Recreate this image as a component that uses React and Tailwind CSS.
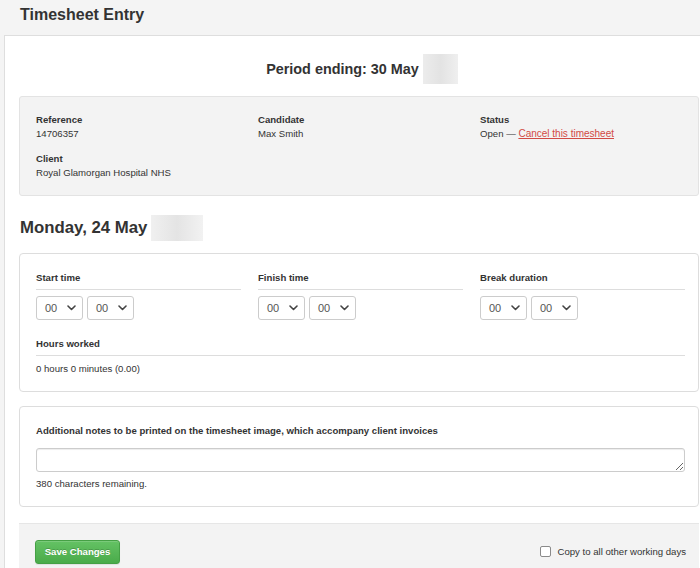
import React from "react";

function Chevron() {
  return (
    <svg width="9" height="6" viewBox="0 0 9 6" className="shrink-0">
      <polyline points="1,1 4.5,4.5 8,1" fill="none" stroke="#444" strokeWidth="1.6" strokeLinecap="round" strokeLinejoin="round" />
    </svg>
  );
}

function Sel() {
  return (
    <div className="w-[47px] h-[24px] border border-[#cccccc] rounded-[3px] bg-white flex items-center justify-between pl-[8px] pr-[6px] text-[11px] text-[#555555]">
      <span className="text-[#555555]">00</span>
      <Chevron />
    </div>
  );
}

function TimeCol({ label }) {
  return (
    <div>
      <div className="font-bold leading-[14px] pb-[4px] border-b border-[#dddddd]">{label}</div>
      <div className="mt-[6px] flex gap-[4px]">
        <Sel />
        <Sel />
      </div>
    </div>
  );
}

export default function App() {
  return (
    <div
      className="w-[700px] h-[568px] overflow-hidden bg-[#f4f4f4] text-[#333] text-[9.6px]"
      style={{ fontFamily: '"Liberation Sans", Arial, sans-serif' }}
    >
      <div className="h-[35px] pl-[20px] pt-[5px]">
        <h1 className="text-[16px] leading-[20px] font-bold text-[#333]">Timesheet Entry</h1>
      </div>

      <div className="ml-[4px] h-full bg-white border-l border-t border-[#dedede] pl-[14px] pr-[1px]">
        <div className="pt-[18px] h-[48px] flex items-end justify-center pl-[6px]">
          <div className="h-[30px] flex items-center gap-[4px]">
            <span className="text-[14.4px] font-bold leading-[20px]">Period ending: 30 May</span>
            <div className="w-[35px] h-[30px] bg-gradient-to-r from-[#ececec] via-[#e3e3e3] to-[#efefef]" />
          </div>
        </div>

        <div className="mt-[12px] bg-[#f3f3f3] border border-[#e3e3e3] rounded-[3px] pl-[16px] pr-[13px] pt-[16px] pb-[15px]">
          <div className="grid grid-cols-3 gap-x-[17px] gap-y-[11px] leading-[14px]">
            <div>
              <div className="font-bold">Reference</div>
              <div>14706357</div>
            </div>
            <div>
              <div className="font-bold">Candidate</div>
              <div>Max Smith</div>
            </div>
            <div>
              <div className="font-bold">Status</div>
              <div>
                Open — <a className="text-[#d24a45] underline text-[10px]">Cancel this timesheet</a>
              </div>
            </div>
            <div>
              <div className="font-bold">Client</div>
              <div>Royal Glamorgan Hospital NHS</div>
            </div>
          </div>
        </div>

        <div className="mt-[19px] h-[26px] flex items-center gap-[4px] pl-[1px]">
          <h2 className="text-[16.8px] font-bold leading-[22px]">Monday, 24 May</h2>
          <div className="w-[52px] h-[26px] bg-gradient-to-r from-[#f0f0f0] via-[#e4e4e4] to-[#f2f2f2]" />
        </div>

        <div className="mt-[12px] border border-[#dddddd] rounded-[4px] bg-white pl-[16px] pr-[13px] pt-[17px] pb-[15px]">
          <div className="grid grid-cols-3 gap-x-[17px]">
            <TimeCol label="Start time" />
            <TimeCol label="Finish time" />
            <TimeCol label="Break duration" />
          </div>
          <div className="mt-[17px] font-bold leading-[14px] pb-[4px] border-b border-[#dddddd]">Hours worked</div>
          <div className="mt-[6px] leading-[14px]">0 hours 0 minutes (0.00)</div>
        </div>

        <div className="mt-[14px] border border-[#dddddd] rounded-[4px] bg-white pl-[16px] pr-[13px] pt-[17px] pb-[15px]">
          <div className="font-bold leading-[14px]">
            Additional notes to be printed on the timesheet image, which accompany client invoices
          </div>
          <textarea
            className="mt-[10px] block w-full h-[24px] border border-[#cccccc] rounded-[3px] bg-white shadow-[inset_0_1px_1px_rgba(0,0,0,0.075)]"
            rows={1}
          />
          <div className="mt-[5px] leading-[14px]">380 characters remaining.</div>
        </div>

        <div className="mt-[16px] bg-[#f3f3f3] border-t border-[#e6e6e6] pl-[16px] pr-[13px] pt-[16px] pb-[10px] flex items-center justify-between">
          <button className="w-[85px] h-[24px] rounded-[3px] border border-[#45a045] bg-gradient-to-b from-[#64c264] to-[#4aab4a] text-white font-bold text-[9.6px] [text-shadow:0_-1px_0_rgba(0,0,0,0.2)] shadow-[inset_0_1px_0_rgba(255,255,255,0.15),0_1px_1px_rgba(0,0,0,0.075)]">
            Save Changes
          </button>
          <label className="flex items-center gap-[6px]">
            <span className="w-[11px] h-[11px] border border-[#8a8a8a] rounded-[2px] bg-white" />
            <span>Copy to all other working days</span>
          </label>
        </div>
      </div>
    </div>
  );
}
